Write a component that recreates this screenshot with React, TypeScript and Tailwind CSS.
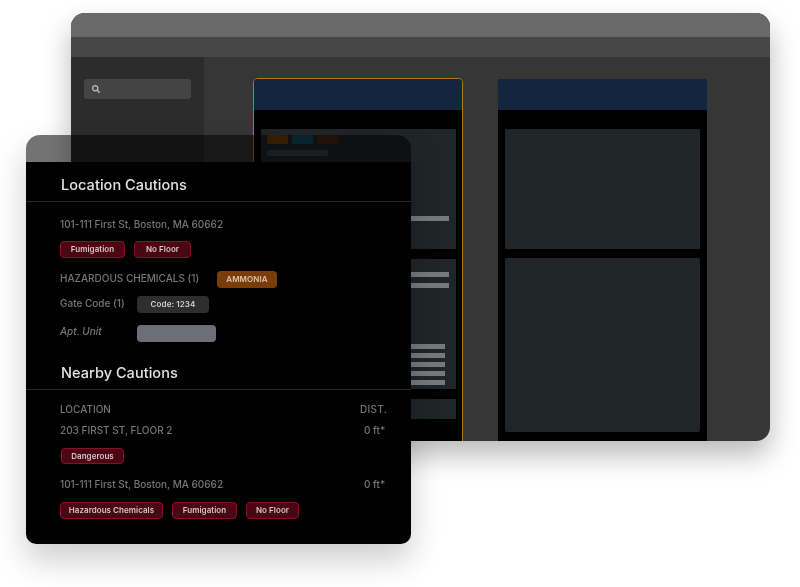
import { FaSearch } from "react-icons/fa";

function Chip({ children, className = "" }: { children: string; className?: string }) {
  return (
    <span
      className={`flex h-[16.5px] items-center justify-center rounded-[4px] border border-[#8a0f26] bg-[#4b0614] text-[8px] font-semibold tracking-[0.05px] text-[#d6c6c8] ${className}`}
    >
      {children}
    </span>
  );
}

function Bars({ count, width }: { count: number; width: string }) {
  return (
    <div className="flex flex-col items-end gap-[4px]">
      {Array.from({ length: count }).map((_, i) => (
        <div key={i} className={`h-[5px] bg-[#77797c] ${width}`} />
      ))}
    </div>
  );
}

function Line({ children, className = "" }: { children: string; className?: string }) {
  return <div className={`h-4 text-[10px] font-medium leading-4 text-[#767676] ${className}`}>{children}</div>;
}

export default function App() {
  return (
    <div className="relative h-[587px] w-[800px] overflow-hidden bg-white blur-[0.5px] [font-family:Inter,'Liberation_Sans',sans-serif]">
      {/* back window */}
      <div className="ml-[71px] mt-[13px] flex h-[428px] w-[699px] flex-col overflow-hidden rounded-[14px] bg-[#363636] shadow-[0_14px_28px_rgba(0,0,0,0.28)]">
        <div className="h-6 shrink-0 bg-[#696969]" />
        <div className="h-5 shrink-0 bg-[#474747]" />
        <div className="flex min-h-0 flex-1">
          <aside className="w-[133px] shrink-0 bg-[#2c2c2c] px-[13px] pt-[22px]">
            <div className="flex h-5 w-[107px] items-center rounded-[3px] bg-[#444444] pl-[8px] text-[#c4c4c4]">
              <FaSearch className="size-[8px]" />
            </div>
          </aside>
          <main className="flex flex-1 gap-[35px] pl-[49px] pt-[21px]">
            <section className="flex h-[364px] w-[210px] flex-col rounded-t-[5px] border border-b-0 border-[#a87b1c] bg-black">
              <div className="h-[31px] shrink-0 rounded-t-[4px] bg-[#14263f]" />
              <div className="flex flex-col gap-[10px] pl-[7px] pr-[6px] pt-[19px]">
                <div className="flex h-[120px] flex-col bg-[#202528] px-[6px] pt-[6px]">
                  <div className="flex gap-[4px]">
                    <div className="h-[9px] w-[21px] rounded-[2px] bg-[#7a3f0c]" />
                    <div className="h-[9px] w-[21px] rounded-[2px] bg-[#0d5663]" />
                    <div className="h-[9px] w-[21px] rounded-[2px] bg-[#4a2c10]" />
                  </div>
                  <div className="mt-[6px] h-[6px] w-[61px] rounded-[1px] bg-[#3e4246]" />
                  <div className="mt-[60px] pr-[1px]">
                    <Bars count={1} width="w-[120px]" />
                  </div>
                </div>
                <div className="flex h-[130px] flex-col bg-[#202528] pl-[6px] pt-[13px]">
                  <div className="pr-[7px]">
                    <div className="flex flex-col items-end gap-[6px]">
                      <div className="h-[5px] w-[120px] bg-[#77797c]" />
                      <div className="h-[5px] w-[120px] bg-[#77797c]" />
                    </div>
                  </div>
                  <div className="mt-[56px] pr-[11px]">
                    <Bars count={5} width="w-[100px]" />
                  </div>
                </div>
                <div className="h-[20px] bg-[#202528]" />
              </div>
            </section>
            <section className="mt-[1px] flex h-[363px] w-[209px] flex-col rounded-t-[4px] bg-black">
              <div className="h-[31px] shrink-0 rounded-t-[4px] bg-[#14263f]" />
              <div className="flex flex-col gap-[9px] px-[7px] pt-[19px]">
                <div className="h-[120px] bg-[#202528]" />
                <div className="h-[174px] rounded-[2px] bg-[#202528]" />
              </div>
            </section>
          </main>
        </div>
      </div>

      {/* floating panel */}
      <div className="absolute left-[26px] top-[135px] flex h-[409px] w-[385px] flex-col rounded-b-[10px] rounded-t-[14px] shadow-[0_16px_32px_rgba(0,0,0,0.2)]">
        <div className="h-[27px] shrink-0 rounded-t-[14px] bg-black/55" />
        <div className="flex-1 rounded-b-[10px] bg-black">
          <div className="flex h-10 items-center border-b border-[#2a2a2a] pl-[35px] pt-[7px] text-[14.5px] font-medium tracking-[0.05px] text-[#e2e2e2]">
            Location Cautions
          </div>
          <div className="pl-[34px] pr-[24px] pt-[14px]">
            <Line>101-111 First St, Boston, MA 60662</Line>
            <div className="mt-[9px] flex gap-[9px]">
              <Chip className="w-[65px]">Fumigation</Chip>
              <Chip className="w-[57px]">No Floor</Chip>
            </div>
            <div className="mt-[13px] flex h-[17px] items-center">
              <span className="w-[157px] pb-[2px] text-[10px] font-medium text-[#767676]">HAZARDOUS CHEMICALS (1)</span>
              <span className="flex h-[17px] w-[60px] items-center justify-center rounded-[4px] bg-[#7a3d0a] text-[8px] font-semibold tracking-[0.1px] text-[#d8c4ac]">
                AMMONIA
              </span>
            </div>
            <div className="mt-[8px] flex h-[17px] items-center">
              <span className="w-[77px] pb-[2px] text-[10px] font-medium text-[#767676]">Gate Code (1)</span>
              <span className="flex h-[17px] w-[72px] items-center justify-center rounded-[4px] bg-[#2e2e2e] text-[8px] font-semibold tracking-[0.1px] text-[#cfcfcf]">
                Code: 1234
              </span>
            </div>
            <div className="mt-[12px] flex h-[17px] items-center">
              <span className="w-[77px] pb-[3px] text-[10px] font-medium italic text-[#767676]">Apt. Unit</span>
              <span className="h-[17px] w-[79px] rounded-[4px] bg-[#6e6e78]" />
            </div>
          </div>
          <div className="flex h-[48px] items-center border-b border-[#2a2a2a] pl-[35px] pt-[15px] text-[14.5px] font-medium tracking-[0.05px] text-[#e2e2e2]">
            Nearby Cautions
          </div>
          <div className="pl-[34px] pr-[24px] pt-[11px]">
            <div className="flex justify-between">
              <Line>LOCATION</Line>
              <Line className="tracking-[0.3px]">DIST.</Line>
            </div>
            <div className="mt-[5px] flex justify-between">
              <Line>203 FIRST ST, FLOOR 2</Line>
              <Line className="w-[23px]">0 ft*</Line>
            </div>
            <div className="ml-[1px] mt-[10px] flex">
              <Chip className="w-[63px]">Dangerous</Chip>
            </div>
            <div className="mt-[12px] flex justify-between">
              <Line>101-111 First St, Boston, MA 60662</Line>
              <Line className="w-[23px]">0 ft*</Line>
            </div>
            <div className="mt-[10px] flex gap-[9px]">
              <Chip className="w-[103px]">Hazardous Chemicals</Chip>
              <Chip className="w-[65px]">Fumigation</Chip>
              <Chip className="w-[53px]">No Floor</Chip>
            </div>
          </div>
        </div>
      </div>
    </div>
  );
}
